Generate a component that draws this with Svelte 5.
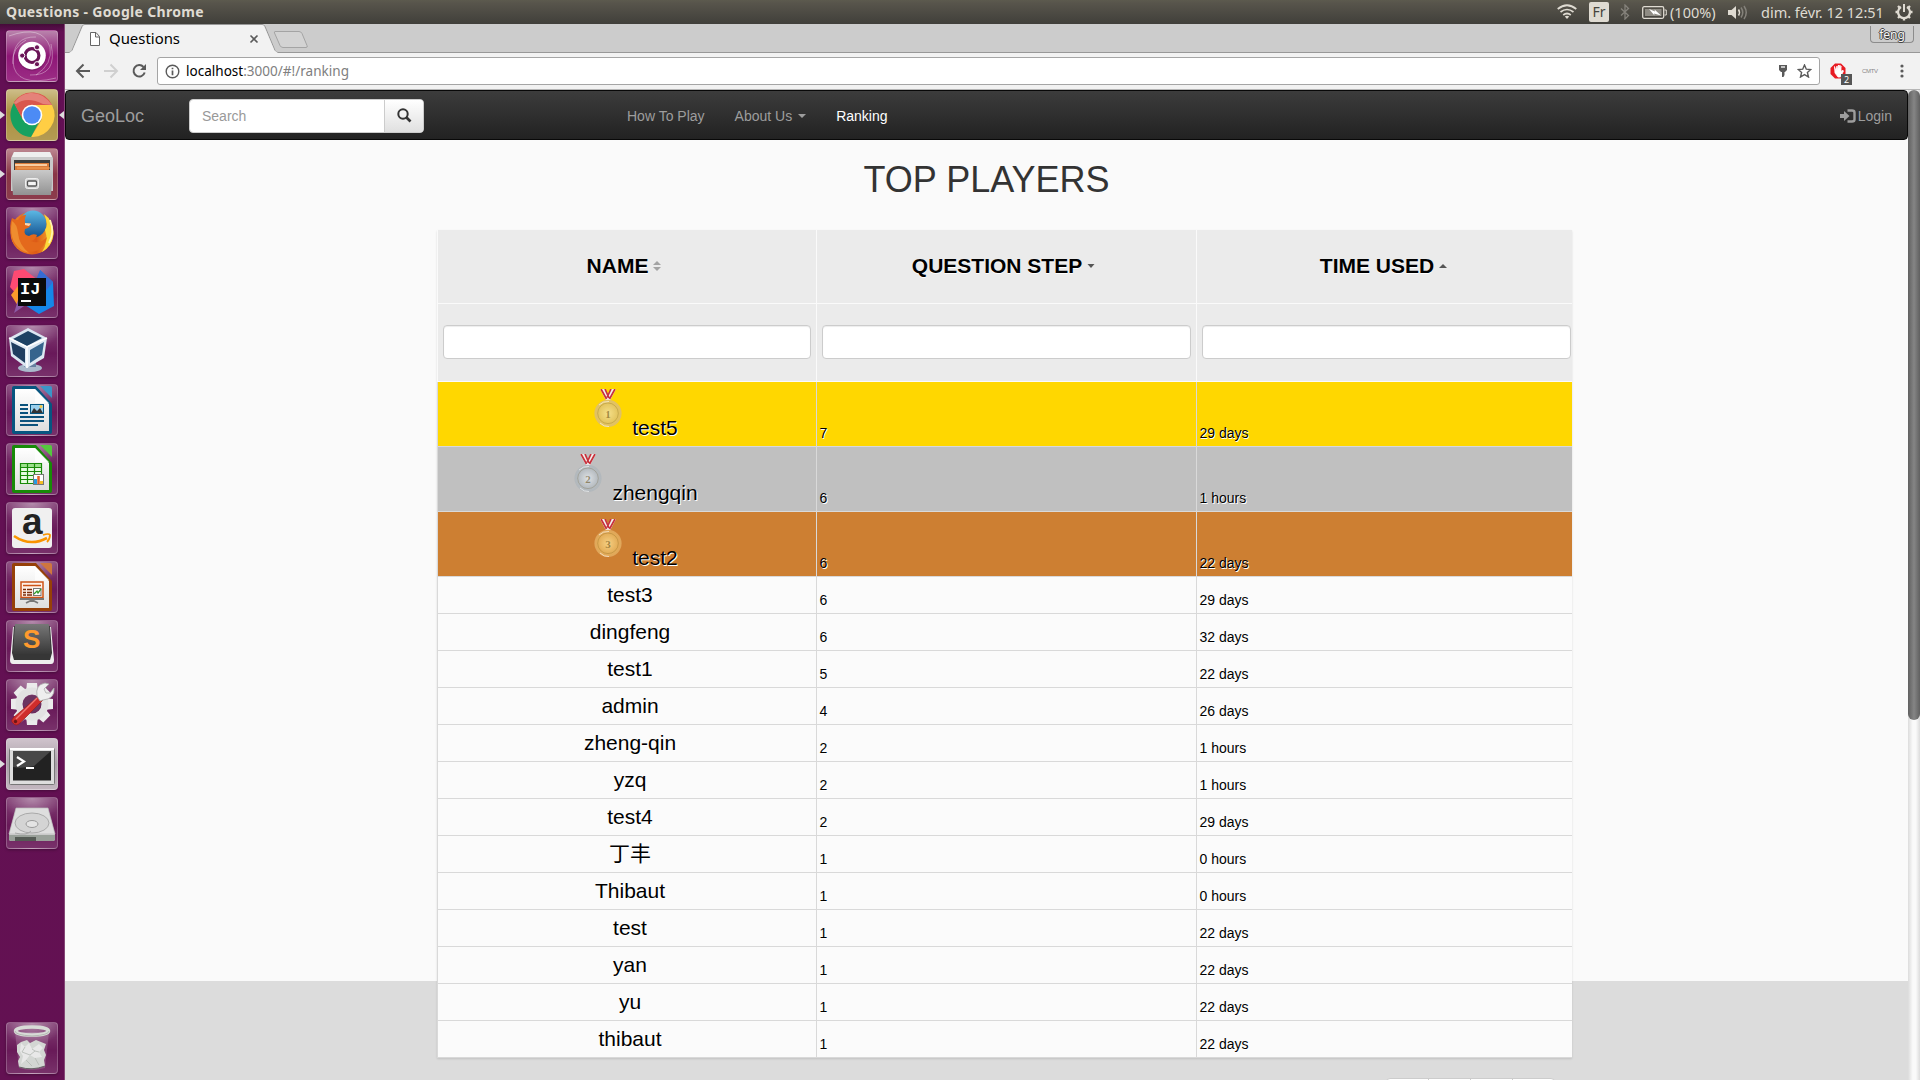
<script>
  const players = [
    { name: 'test5', step: 7, time: '29 days', medal: 'gold', place: 1 },
    { name: 'zhengqin', step: 6, time: '1 hours', medal: 'silver', place: 2 },
    { name: 'test2', step: 6, time: '22 days', medal: 'bronze', place: 3 },
    { name: 'test3', step: 6, time: '29 days' },
    { name: 'dingfeng', step: 6, time: '32 days' },
    { name: 'test1', step: 5, time: '22 days' },
    { name: 'admin', step: 4, time: '26 days' },
    { name: 'zheng-qin', step: 2, time: '1 hours' },
    { name: 'yzq', step: 2, time: '1 hours' },
    { name: 'test4', step: 2, time: '29 days' },
    { name: '丁丰', step: 1, time: '0 hours' },
    { name: 'Thibaut', step: 1, time: '0 hours' },
    { name: 'test', step: 1, time: '22 days' },
    { name: 'yan', step: 1, time: '22 days' },
    { name: 'yu', step: 1, time: '22 days' },
    { name: 'thibaut', step: 1, time: '22 days' }
  ];
  const apps = ['dash', 'chrome', 'files', 'firefox', 'idea', 'vbox', 'writer', 'calc', 'amazon', 'impress', 'sublime', 'settings', 'terminal', 'disk', 'trash'];
  const running = ['chrome', 'files', 'terminal'];
  const teeth = [0, 45, 90, 135, 180, 225, 270, 315];
</script>

{#snippet office(dark, light)}
  <path d="M8 2H30L46 20V48Q46 50 44 50H8Q6 50 6 48V4Q6 2 8 2Z" fill={dark} />
  <path d="M9 5H29L43 20V47H9Z" fill="url(#paper)" />
  <path d="M29 5V19H43Z" fill="#fff" opacity=".7" />
  <path d="M34 2H44Q46 2 46 4V14Z" fill={light} />
{/snippet}

{#snippet appIcon(app)}
  <svg class="app-icon" viewBox="0 0 52 52">
    {#if app === 'dash'}
      <g fill="none" stroke="#fff" stroke-opacity=".35">
        <path d="M3 6Q36 -6 44 17Q47 34 30 45" />
        <path d="M50 48Q9 58 7 32Q6 18 20 10" />
        <path d="M7 34Q6 6 30 7M45 14Q52 46 24 45" />
      </g>
      <circle cx="26" cy="27" r="13.8" fill="#3b0931" fill-opacity=".25" />
      <circle cx="26" cy="25.6" r="13.8" fill="#fff" />
      <circle cx="26" cy="25.6" r="6.9" fill="none" stroke="#6b1557" stroke-width="3.2" />
      <g fill="#6b1557" stroke="#fff" stroke-width="1">
        <circle cx="16.2" cy="25.6" r="2.6" /><circle cx="31" cy="17.3" r="2.6" /><circle cx="31" cy="34.2" r="2.6" />
      </g>
    {:else if app === 'chrome'}
      <path d="M26 26L8 13A22 22 0 0 1 46 16Z" fill="#dd5549" />
      <path d="M26 16H46A22 22 0 0 1 25 48L36 30Z" fill="#ffce44" />
      <path d="M8 14A22 22 0 0 0 25 48L34 31L17 31Z" fill="#16a160" />
      <path d="M8 14L16 29L26 16H46Q37 3 24 4Q14 5 8 14Z" fill="#d9574d" />
      <path d="M46 16Q37 3 24 4Q14 5 8 14L10 15Q21 7 37 15Z" fill="#eea69e" opacity=".55" />
      <circle cx="26" cy="26" r="10.3" fill="#fff" /><circle cx="26" cy="26" r="8.7" fill="#4c8bf5" />
    {:else if app === 'files'}
      <path d="M8 4H44L47 10V43H5V10Z" fill="#c9c9c9" />
      <path d="M8 4H44L46 9H6Z" fill="#eee" />
      <path d="M8 12H44V24H8Z" fill="#3c3b3b" />
      <path d="M9 15H43V23H9Z" fill="#d97a39" /><path d="M9 17H41" stroke="#ffe1bd" stroke-width="1.6" />
      <path d="M11 20H44" stroke="#f7a45a" />
      <path d="M5 22H47L45 47H7Z" fill="url(#steel)" />
      <rect x="19.5" y="30.500" width="13" height="10" rx="2" fill="#d5d5d5" stroke="#eee" />
      <rect x="21.500" y="33" width="9" height="5" rx="1" fill="#f4f4f4" stroke="#555" stroke-width="1.300" />
    {:else if app === 'firefox'}
      <circle cx="26" cy="26" r="21.500" fill="url(#fox)" />
      <circle cx="27" cy="17" r="13.500" fill="url(#globe)" />
      <path d="M38 7Q47 13 47.500 27Q46 39 36 45Q43 34 39 23Q43 18 38 7Z" fill="#fcd93c" />
      <path d="M44 13Q49 25 43 36" stroke="#fff5b0" stroke-width="1.800" fill="none" />
      <path d="M6 11Q9 13 12 13Q15 8 20 8Q18 12 19 16L25 17Q24 21 19 22Q17 28 23 29Q27 26 31 28Q30 33 24 34Q34 38 41 30Q38 45 23 45Q6 42 5 28Q3 18 6 11Z" fill="#e4691c" />
      <path d="M5 21Q5 41 23 46Q13 38 12 26Q11 17 6 14Z" fill="#f5a23b" opacity=".65" />
      <path d="M19 16L25 16.500L23 19L19 18Z" fill="#f8d8b5" />
    {:else if app === 'idea'}
      <path d="M8 5L18 3L33 15L12 30L4 21Z" fill="#fe4a72" />
      <path d="M5 29L12 20L18 32L12 40Z" fill="#f99b2b" />
      <path d="M12 34L21 38L8 47Z" fill="#8c5aa5" />
      <path d="M34 4L47 16L48 40L33 48L19 39L34 35Z" fill="#1587e8" />
      <path d="M34 4L47 16L38 27L30 14Z" fill="#376bd3" />
      <rect x="12" y="12" width="28" height="28" fill="#0b0b0b" />
      <text class="ij" x="14" y="27.500">IJ</text><path d="M15 35H25" stroke="#fff" stroke-width="2" />
    {:else if app === 'vbox'}
      <ellipse cx="24" cy="43" rx="12" ry="4" fill="#aab9cc" /><path d="M18 34H30V42H18Z" fill="#6680a0" />
      <path d="M22 3L41 13L38 33L21 43L5 31L3 13Z" fill="#dce7f2" />
      <path d="M22 6L36 13L21 21L7 14Z" fill="#1d4264" />
      <path d="M5 17L19 24V38L7 29Z" fill="#203e60" /><path d="M38 17L24 25V38L36 30Z" fill="#36648d" />
      <path d="M3 13L21 22L41 13M21 22V43" stroke="#fff" stroke-width="1.500" fill="none" />
    {:else if app === 'writer'}
      {@render office('#075580', '#3b95c8')}
      <path d="M14 21H22M14 25H22M14 29H22M14 33H38M14 37H38M14 41H32" stroke="#0b527c" stroke-width="2" />
      <rect x="24.500" y="20.500" width="13" height="9" fill="#9ad0ee" stroke="#075580" />
      <path d="M25 29L28 24L31 27L34 24L37 29Z" fill="#333" /><circle cx="35" cy="22.500" r="1.500" fill="#f9c944" />
    {:else if app === 'calc'}
      {@render office('#188a08', '#54c83e')}
      <rect x="14" y="20" width="22" height="21" fill="#e8fbe3" />
      <rect x="14" y="20" width="22" height="5" fill="#9ce08c" />
      <path d="M14.500 20.500H35.500V40.500H14.500ZM21.500 20V41M28.500 20V41M14 24.500H36M14 28.500H36M14 32.500H36M14 36.500H36" stroke="#188a08" stroke-width="1.200" fill="none" />
      <rect x="27.500" y="31.500" width="10" height="10" fill="#fff" stroke="#777" />
      <path d="M29.500 36V41" stroke="#269be2" stroke-width="3" /><path d="M32.500 33V41" stroke="#e26126" stroke-width="2.500" /><path d="M35.500 38V41" stroke="#f4bf25" stroke-width="3" />
    {:else if app === 'amazon'}
      <rect x="6" y="6" width="40" height="40" rx="3" fill="#f0f0f0" />
      <text class="amz" x="16" y="32">a</text>
      <path d="M8 34Q24 45 41 36" stroke="#f99400" stroke-width="2.600" fill="none" /><path d="M37 33Q43 31 44 33Q44 37 41 40" stroke="#f99400" stroke-width="1.800" fill="none" />
    {:else if app === 'impress'}
      {@render office('#964008', '#cf763e')}
      <rect x="15" y="21" width="22" height="15.500" fill="#fff1e8" stroke="#cc5317" stroke-width="1.500" />
      <path d="M17 24.500H35" stroke="#cc5317" stroke-width="1.500" />
      <path d="M17 28.500H20M17 31.500H20M17 34H20M21 28.500H26M21 31.500H26M21 34H26" stroke="#7b2c08" stroke-width="1.600" />
      <rect x="27.500" y="27.500" width="7.500" height="7" fill="#fff" stroke="#777" /><path d="M28 33L31 30L32 32L35 28" stroke="#2f9a2b" stroke-width="1.300" fill="none" />
      <path d="M14 38H38M26 38V41M20 42L26 39L32 42" stroke="#777" stroke-width="1.800" fill="none" />
    {:else if app === 'sublime'}
      <path d="M7 7H45L48 40Q48 44 45 44H7Q4 44 4 40Z" fill="#eee" />
      <path d="M8 6H44L46 33L44 40H8L6 33Z" fill="#363636" />
      <path d="M9 4H43L45 34H7Z" fill="url(#dark)" />
      <text class="sub" x="17" y="28">S</text>
    {:else if app === 'settings'}
      <g fill="#ebebeb">
        {#each teeth as t}<path d="M21 4H31L32 13H20Z" transform="rotate({t} 26 25)" />{/each}
      </g>
      <circle cx="26" cy="25" r="13" fill="none" stroke="#e2e2e2" stroke-width="7" />
      <circle cx="26" cy="25" r="9" fill="#6b3460" />
      <path d="M33 17L37 21L14 44Q10 48 7 44Q4 42 8 38Z" fill="#cf2d2b" stroke="#991c1c" stroke-width=".7" />
      <path d="M10 40L31 19" stroke="#ef7774" stroke-width="1.500" /><circle cx="9.500" cy="42.500" r="1.700" fill="#6e1515" />
      <path d="M31 17Q29 6 39 4L43 5L38 10L40 14L44 14L48 9Q49 20 37 21L34 22Z" fill="#eee" stroke="#aaa" stroke-width=".8" />
    {:else if app === 'terminal'}
      <rect x="3.500" y="10.500" width="45" height="36" rx="1" fill="#ddd" stroke="#777" />
      <path d="M4 11H48" stroke="#fff" stroke-width="2" />
      <rect x="7" y="13" width="38" height="29.500" fill="#222" /><path d="M7 13H45L28 28Q15 31 7 29Z" fill="#474747" />
      <path d="M11 19L18 23.500L11 28" fill="none" stroke="#fff" stroke-width="2.200" /><path d="M20 30H28" stroke="#fff" stroke-width="2" />
    {:else if app === 'disk'}
      <path d="M10 12H42L49 38V42Q49 44 46 44H6Q3 44 3 42V38Z" fill="#d0d0d0" />
      <path d="M10 11H42L49 37H3Z" fill="#dedede" stroke="#bbb" stroke-width=".7" />
      <ellipse cx="26" cy="26" rx="17" ry="10" fill="#d4d4d4" stroke="#aaa" /><ellipse cx="26" cy="27" rx="6" ry="3.500" fill="#e4e4e4" stroke="#999" />
      <path d="M9 36Q21 39 25 34" stroke="#aaa" fill="none" /><path d="M3 38H49V42Q49 44 46 44H6Q3 44 3 42Z" fill="#99a099" /><path d="M9 40H30V44H9Z" fill="#555b55" />
    {:else}
      <path d="M9 10H43L39 46Q26 50 13 46Z" fill="#fff" fill-opacity=".16" />
      <path d="M11 23L15 20L21 18L24 21L30 18L35 20L40 22L38 28L40 33L38 38L39 44Q26 49 13 45L12 39L14 35L11 30Z" fill="#d3d6d3" />
      <path d="M15 21L19 25L23 21L26 27L33 22L37 26L33 30L36 35L29 36L24 33L20 38L15 42L17 34L14 29Z" fill="#e8e8e8" />
      <path d="M19 25L16 30L24 33L29 29L26 27M29 36L33 43M20 38L26 44M33 30L29 29" stroke="#b2b8b2" stroke-width=".8" fill="none" />
      <path d="M13 45Q26 49 39 44" stroke="#666" fill="none" />
      <ellipse cx="26" cy="9" rx="16.500" ry="4" fill="none" stroke="#d8dbd7" stroke-width="3.500" /><path d="M9 9Q9 13 26 14Q43 13 43 9" stroke="#b4b9b3" fill="none" />
    {/if}
  </svg>
{/snippet}

<svg class="defs" width="0" height="0">
  <defs>
    <linearGradient id="paper" x2="0" y2="1"><stop stop-color="#fff" /><stop offset="1" stop-color="#dedede" /></linearGradient>
    <linearGradient id="steel" x2="0" y2="1"><stop stop-color="#c9c9c9" /><stop offset="1" stop-color="#929292" /></linearGradient>
    <linearGradient id="dark" x2="0" y2="1"><stop stop-color="#777" /><stop offset="1" stop-color="#383838" /></linearGradient>
    <linearGradient id="fox" x2="1" y2="0"><stop stop-color="#f08a24" /><stop offset=".6" stop-color="#dd5a17" /><stop offset="1" stop-color="#f6b62f" /></linearGradient>
    <linearGradient id="globe" x2="0" y2="1"><stop stop-color="#5cb8e4" /><stop offset="1" stop-color="#12508f" /></linearGradient>
    <radialGradient id="gold"><stop stop-color="#f5e08a" /><stop offset=".75" stop-color="#e3c45e" /><stop offset="1" stop-color="#e0c068" /></radialGradient>
    <radialGradient id="silver"><stop stop-color="#dde1e4" /><stop offset=".75" stop-color="#b4babf" /><stop offset="1" stop-color="#b2b8bc" /></radialGradient>
    <radialGradient id="bronze"><stop stop-color="#f5d083" /><stop offset=".75" stop-color="#e3ac57" /><stop offset="1" stop-color="#dfa65c" /></radialGradient>
  </defs>
</svg>

<div class="desktop">
  <header class="panel">
    <b class="win-title">Questions - Google Chrome</b>
    <div class="indicators">
      <svg class="wifi" width="20" height="16" viewBox="0 0 20 16" fill="none" stroke="#dfdbd2" stroke-width="1.700"><path d="M.7 5Q10 -2.500 19.300 5M3.500 8Q10 3 16.500 8M6.200 11Q10 8 13.800 11" /><path d="M7.800 12.500Q10 11 12.200 12.500L10 15Z" fill="#dfdbd2" stroke="none" /></svg>
      <span class="lang">Fr</span>
      <svg class="bt" width="10" height="16" viewBox="0 0 10 16" fill="none" stroke="#85827b" stroke-width="1.300"><path d="M1 4.500L8.500 11.500L5 15V1L8.500 4.500L1 11.500" /></svg>
      <svg class="bat" width="25" height="13" viewBox="0 0 25 13"><rect x=".7" y=".7" width="21" height="11.600" rx="1.500" fill="none" stroke="#dfdbd2" stroke-width="1.300" /><path d="M22.500 4H24.300V9H22.500" fill="none" stroke="#dfdbd2" /><rect x="3" y="3" width="16.500" height="7" fill="#8f8c84" /><path d="M7 3L13 5.500L12.500 3.500L19 9.500L12 7.500L12.500 9.500Z" fill="#fff" /></svg>
      <span class="pct">(100%)</span>
      <svg class="vol" width="20" height="15" viewBox="0 0 20 15" fill="none" stroke-width="1.500"><path d="M0 5H3.500L8 1V14L3.500 10H0Z" fill="#dfdbd2" /><path d="M10.500 4.500Q12.500 7.500 10.500 10.500" stroke="#dfdbd2" /><path d="M13 2.500Q16.500 7.500 13 12.500M16 1Q20.500 7.500 16 14" stroke="#85827b" /></svg>
      <span class="clock">dim. févr. 12 12:51</span>
      <svg class="gear" width="18" height="18" viewBox="0 0 18 18" fill="none" stroke="#dfdbd2"><path d="M6 4A6 6 0 1 0 12 4" stroke-width="2.200" /><path d="M9 1V9" stroke-width="2" /><path d="M2.500 9H.5M17.500 9H15.500M9 15.500V17.500M4.500 13.500L3 15M13.500 13.500L15 15M4.500 4.500L3 3M13.500 4.500L15 3" stroke-width="2.400" /></svg>
    </div>
  </header>

  <div class="below">
    <nav class="launcher">
      {#each apps as app}
        <div class="tile {app}">
          {@render appIcon(app)}
          {#if running.includes(app)}<i class="run"></i>{/if}
          {#if app === 'chrome'}<i class="focus"></i>{/if}
        </div>
      {/each}
    </nav>

    <div class="browser">
      <div class="tabstrip">
        <svg class="tabs" width="260" height="29" viewBox="0 0 260 29">
          <path d="M0 28.500H4Q6 28.500 7 26.500L17 2.500Q18 .5 20 .5H197Q199 .5 200 2.500L210 26.500Q211 28.500 213 28.500H260" fill="none" stroke="#989898" />
          <path d="M4 29L7.500 26.500L17.500 3Q18 1 20 1H197Q199 1 199.500 3L209.500 26.500L213 29Z" fill="#f2f2f2" />
          <path d="M210 7.500H234Q236 7.500 237 9.500L242 21.500Q243 23.500 241 23.500H218Q216 23.500 215 21.500L209.500 9Q209 7.500 210 7.500Z" fill="#d3d3d3" stroke="#a4a4a4" />
          <path d="M25.500 8.500H31L34.500 12.500V21.500H25.500ZM30.500 8.500V13H34.500" fill="#fff" stroke="#666" />
          <path d="M185.500 11.500L192.500 18.500M192.500 11.500L185.500 18.500" stroke="#5a5a5a" stroke-width="1.600" />
          <text class="tab-title" x="44" y="19.500" textLength="71" lengthAdjust="spacingAndGlyphs">Questions</text>
        </svg>
        <span class="profile">feng</span>
      </div>
      <div class="toolbar">
        <svg class="nav-icons" width="74" height="16" viewBox="0 0 74 16" fill="none" stroke-width="2"><path d="M15 8H2.500M8.500 1.500L2 8L8.500 14.500" stroke="#5a5a5a" /><path d="M29 8H41.500M35.500 1.500L42 8L35.500 14.500" stroke="#d0d0d0" /><path d="M68.500 4A5.700 5.700 0 1 0 69.700 9.500" stroke="#5a5a5a" /><path d="M71 1V7H65Z" fill="#5a5a5a" /></svg>
        <div class="omnibox">
          <svg width="15" height="15" viewBox="0 0 15 15" fill="none" stroke="#5a5a5a"><circle cx="7.500" cy="7.500" r="6.300" stroke-width="1.400" /><path d="M7.500 6.500V11.200M7.500 3.700V5.300" stroke-width="1.700" /></svg>
          <svg class="url" width="170" height="24"><text x="0" y="17" textLength="163" lengthAdjust="spacingAndGlyphs"><tspan fill="#000">localhost</tspan><tspan fill="#808080">:3000/#!/ranking</tspan></text></svg>
          <svg class="key" width="8" height="13" viewBox="0 0 8 13"><path d="M0 0H8V5L6 7H5.500V10L4.500 12H3V7H2L0 5Z" fill="#5a5a5a" /><path d="M2 2H6" stroke="#fff" stroke-width="1.300" /></svg>
          <svg width="15" height="14" viewBox="0 0 15 14"><path d="M7.500 1L9.300 5.200L13.800 5.500L10.400 8.500L11.500 13L7.500 10.600L3.500 13L4.600 8.500L1.200 5.500L5.700 5.200Z" fill="none" stroke="#5a5a5a" stroke-width="1.400" /></svg>
        </div>
        <div class="blocker">
          <svg width="17" height="16" viewBox="0 0 17 16"><path d="M5 .5H11L15.500 5V11L11 15.500H5L.5 11V5Z" fill="#e81b23" /><path d="M4.500 3.500L5 10L8 14H10.500L13.500 8L12.500 7L11 9V3L10 6.500V2L8.500 6.500V2L7 7V3L6 8Z" fill="#fff" stroke="#fff" stroke-width=".8" /></svg>
          <b>2</b>
        </div>
        <span class="cmtv">CMTV</span>
        <svg class="dots" width="4" height="14" viewBox="0 0 4 14" fill="#5a5a5a"><circle cx="2" cy="2" r="1.600" /><circle cx="2" cy="7" r="1.600" /><circle cx="2" cy="12" r="1.600" /></svg>
      </div>

      <div class="viewport">
        <main>
          <div class="navbar">
            <span class="brand">GeoLoc</span>
            <div class="search">
              <span>Search</span>
              <button aria-label="Search"><svg width="15" height="15" viewBox="0 0 15 15" fill="none" stroke="#333"><circle cx="6" cy="6" r="4.700" stroke-width="2" /><path d="M9.500 9.500L13.500 13.500" stroke-width="2.600" /></svg></button>
            </div>
            <span class="how">How To Play</span>
            <span class="about">About Us <i class="caret"></i></span>
            <span class="rank">Ranking</span>
            <span class="login"><svg width="16" height="14" viewBox="0 0 16 14"><path d="M0 5H4V2L9.500 7L4 12V9H0Z" fill="#9d9d9d" /><path d="M7.500 1.500H12Q14.500 1.500 14.500 3.500V10.500Q14.500 12.500 12 12.500H7.500" fill="none" stroke="#9d9d9d" stroke-width="2.400" /></svg>Login</span>
          </div>
          <h1>TOP PLAYERS</h1>
          <div class="table">
            <div class="row head">
              <div class="cell">NAME<svg width="8" height="10" viewBox="0 0 8 10" fill="#a3a3a3"><path d="M0 4L4 0L8 4ZM0 6L4 10L8 6Z" /></svg></div>
              <div class="cell">QUESTION STEP<svg width="8" height="10" viewBox="0 0 8 10" fill="#555"><path d="M.5 3L4 7L7.500 3Z" /></svg></div>
              <div class="cell">TIME USED<svg width="8" height="10" viewBox="0 0 8 10" fill="#555"><path d="M0 7L4 3L8 7Z" /></svg></div>
            </div>
            <div class="row filters">
              <div class="cell"><input aria-label="Name" /></div>
              <div class="cell"><input aria-label="Step" /></div>
              <div class="cell"><input aria-label="Time" /></div>
            </div>
            {#each players as p}
              <div class="row player {p.medal ?? ''}">
                <div class="cell name">
                  {#if p.medal}
                    <svg class="medal" width="28" height="40" viewBox="0 0 28 40">
                      <path d="M6 0L12 11.500H16L22 0H16.500L14 5L11.500 0Z" fill="#f2eded" />
                      <path d="M7 0L12.500 10M11 0L15 9M21 0L15.500 10M17 0L13 8.500" stroke="#c8313c" stroke-width="1.700" />
                      <circle cx="14" cy="24.300" r="13.600" fill="url(#{p.medal})" />
                      <circle cx="14" cy="24.300" r="10.300" fill="none" stroke="#5c450c" stroke-opacity=".2" />
                      <path d="M5 16Q9 12 15 12.500M6 34Q10 38 15 37.500" stroke="#fff" stroke-opacity=".6" fill="none" />
                      <text x="14" y="28.500" text-anchor="middle">{p.place}</text>
                    </svg>
                  {/if}
                  <span>{p.name}</span>
                </div>
                <div class="cell">{p.step}</div>
                <div class="cell">{p.time}</div>
              </div>
            {/each}
          </div>
          <div class="pager"><i></i><i></i><i></i><i></i></div>
        </main>
        <div class="scroll"><i></i></div>
      </div>
    </div>
  </div>
</div>

<style>
  :global(body) { margin: 0; overflow: hidden; }
  * { box-sizing: border-box; }
  .defs { position: absolute; }
  .desktop { width: 1920px; height: 1080px; overflow: hidden; display: flex; flex-direction: column; font: 14px/20px "Liberation Sans", "Noto Sans CJK SC", sans-serif; }
  .panel { height: 24px; flex: none; display: flex; justify-content: space-between; align-items: center; padding: 0 7px 0 6px; background: linear-gradient(#5c5a4e, #57544b 15%, #403f3a); color: #dfdbd2; font-family: "Noto Sans", sans-serif; }
  .win-title { font-size: 14px; letter-spacing: .32px; }
  .indicators { display: flex; align-items: center; }
  .lang { width: 20px; height: 20px; margin-left: 12px; border-radius: 2px; background: #dfdbd2; color: #45433d; font-size: 14px; text-align: center; }
  .bt { margin-left: 11px; }
  .bat { margin-left: 12px; }
  .pct { width: 46px; margin-left: 3px; font-size: 14.500px; white-space: nowrap; }
  .vol { margin-left: 12px; }
  .clock { width: 122px; margin-left: 13px; font-size: 14.500px; white-space: nowrap; }
  .gear { margin-left: 12px; }
  .below { flex: 1; display: flex; min-height: 0; }
  .launcher { width: 65px; flex: none; padding: 6px 0 6px 6px; display: flex; flex-direction: column; gap: 7px; background: linear-gradient(#450b39, #630f54 8px, #631152); border-right: 1px solid #854676; }
  .tile { position: relative; width: 52px; height: 52px; flex: none; border-radius: 4px; border: 1px solid rgba(255,255,255,.22); background: radial-gradient(ellipse 60% 45% at 50% 0, rgba(255,255,255,.4), transparent), linear-gradient(rgba(255,255,255,.2), rgba(255,255,255,.04) 55%, rgba(255,255,255,.14)); box-shadow: 0 1px 3px rgba(0,0,0,.3); }
  .tile.dash { background: linear-gradient(#b984ac, #8e1676 50%, #9c2d85); }
  .tile.chrome { background: linear-gradient(#cdbd88, #ac9040 45%, #b49b53); }
  .tile.files { background: linear-gradient(#bc8690, #893546 50%, #8c3c4c); }
  .tile.terminal { background: linear-gradient(#cfc3cc, #aaa0a8 50%, #c2b6bf); }
  .tile.trash { margin-top: auto; }
  .app-icon { display: block; width: 52px; height: 52px; margin: -1px; }
  .run, .focus { position: absolute; top: 21px; border: 4px solid transparent; }
  .run { left: -7px; border-left: 5px solid #ddd; border-right: 0; }
  .focus { right: -7px; border-right: 5px solid #ddd; border-left: 0; }
  .ij { font: bold 17px "Liberation Mono", monospace; fill: #fff; }
  .amz { font: bold 37px "Liberation Sans", sans-serif; fill: #222; }
  .sub { font: bold 26px "Liberation Sans", sans-serif; fill: #ff9a2e; }

  .browser { flex: 1; min-width: 0; display: flex; flex-direction: column; }
  .tabstrip { height: 29px; display: flex; justify-content: space-between; background: linear-gradient(#ccc 28px, #989898 28px); }
  .tab-title { font: 14px "Noto Sans", sans-serif; }
  .profile { width: 44px; height: 17px; margin: 2px 6px 0 0; border: 1px solid #8c8c8c; border-top: 0; border-radius: 0 0 4px 4px; color: #f5f5f5; font: 12px/18px "Noto Sans", sans-serif; text-align: center; text-shadow: 0 1px #444, 0 -1px #444, 1px 0 #444, -1px 0 #444; }
  .toolbar { height: 37px; display: flex; align-items: center; padding: 0 16px 0 10px; background: #f2f2f2; border-bottom: 1px solid #b6b6b6; }
  .omnibox { width: 1663px; height: 28px; margin-left: 8px; display: flex; align-items: center; padding: 0 7px; background: #fff; border: 1px solid #a5a5a5; border-radius: 3px; }
  .url { margin-left: 6px; font: 13.500px "Noto Sans", sans-serif; }
  .key { margin: 0 10px 0 auto; }
  .blocker { position: relative; width: 22px; height: 16px; margin-left: 10px; }
  .blocker b { position: absolute; left: 11px; top: 11px; width: 11px; height: 11px; background: #555; color: #fff; font: 9px/11px "Noto Sans", sans-serif; text-align: center; }
  .cmtv { width: 16px; margin-left: 10px; color: #888; font-size: 6px; line-height: 6px; letter-spacing: -.3px; }
  .dots { margin-left: auto; }

  .viewport { flex: 1; min-height: 0; display: flex; }
  main { width: 1843px; height: 990px; overflow: hidden; background: linear-gradient(#fafafa 891px, #dcdcdc 891px); }
  .navbar { height: 50px; display: flex; align-items: center; border: 1px solid #080808; border-radius: 4px; background: linear-gradient(#3c3c3c, #222); color: #9d9d9d; padding: 2px 15px 0; }
  .brand { width: 108px; font-size: 18px; }
  .search { width: 235px; height: 34px; display: flex; border: 1px solid #ccc; border-radius: 4px; background: #fff; color: #999; overflow: hidden; }
  .search span { flex: 1; padding: 6px 12px; }
  .search button { width: 39px; border: 0; border-left: 1px solid #ccc; background: linear-gradient(#fff, #e0e0e0); padding: 1px 0 0; }
  .how { margin-left: 203px; }
  .about { margin-left: 30px; display: flex; align-items: center; }
  .caret { margin-left: 6px; border: 4px solid transparent; border-top-color: #9d9d9d; border-bottom: 0; }
  .rank { margin-left: 30px; color: #fff; }
  .login { margin-left: auto; display: flex; align-items: center; gap: 2px; }
  h1 { margin: 20px 0 0; width: 1843px; text-align: center; font-size: 36px; line-height: 40px; font-weight: 400; color: #333; }
  .table { width: 1135px; margin: 30px 0 0 372px; color: #000; background: #fbfbfb; box-shadow: 0 1px 2px rgba(0,0,0,.12); }
  .row { display: grid; grid-template-columns: 379px 380px 376px; }
  .cell { border-left: 1px solid #d9d9d9; border-bottom: 1px solid #d9d9d9; }
  .head, .filters { background: #ebebeb; }
  .head .cell, .filters .cell { border-color: #fafafa; }
  .head .cell { height: 74px; display: flex; align-items: center; justify-content: center; gap: 5px; padding: 0 6px 2px 0; font-size: 21px; font-weight: 700; text-shadow: 0 1px #fff; }
  .head .cell:last-child { padding-right: 2px; }
  .filters .cell { height: 78px; padding: 21px 5px 0 5px; }
  .filters .cell:last-child { padding-right: 1px; }
  .filters input { display: block; width: 100%; height: 34px; border: 1px solid #ccc; border-radius: 4px; background: #fff; box-shadow: inset 0 1px 1px rgba(0,0,0,.075); }
  .player .cell { height: 37px; display: flex; align-items: flex-end; padding: 0 2.500px 3px; text-shadow: 1px 1px #fff; }
  .player .name { justify-content: center; padding: 0 0 3px 6px; font-size: 21px; line-height: 30px; }
  .gold .cell, .silver .cell, .bronze .cell { height: 65px; }
  .gold .name, .silver .name, .bronze .name { padding-left: 18px; }
  .gold { background: #ffd700; }
  .silver { background: #c0c0c0; }
  .bronze { background: #cd7f32; }
  .medal { align-self: flex-start; margin: 7px 10px 0 0; }
  .medal text { font: bold 11px "Liberation Serif", serif; fill: #5c450c; fill-opacity: .55; text-shadow: none; }
  .pager { width: 169px; margin: 20px 0 0 1321px; display: flex; border: 1px solid #ccc; border-radius: 4px; background: #fff; overflow: hidden; }
  .pager i { flex: 1; height: 34px; border-left: 1px solid #ccc; }
  .pager i:first-child { border-left: 0; }
  .scroll { width: 12px; background: linear-gradient(90deg, #dcdcdc, #fafafa 40%, #fafafa 65%, #dcdcdc); }
  .scroll i { display: block; height: 630px; border-radius: 6px; background: linear-gradient(90deg, #606060, #858585 50%, #606060); }
</style>
